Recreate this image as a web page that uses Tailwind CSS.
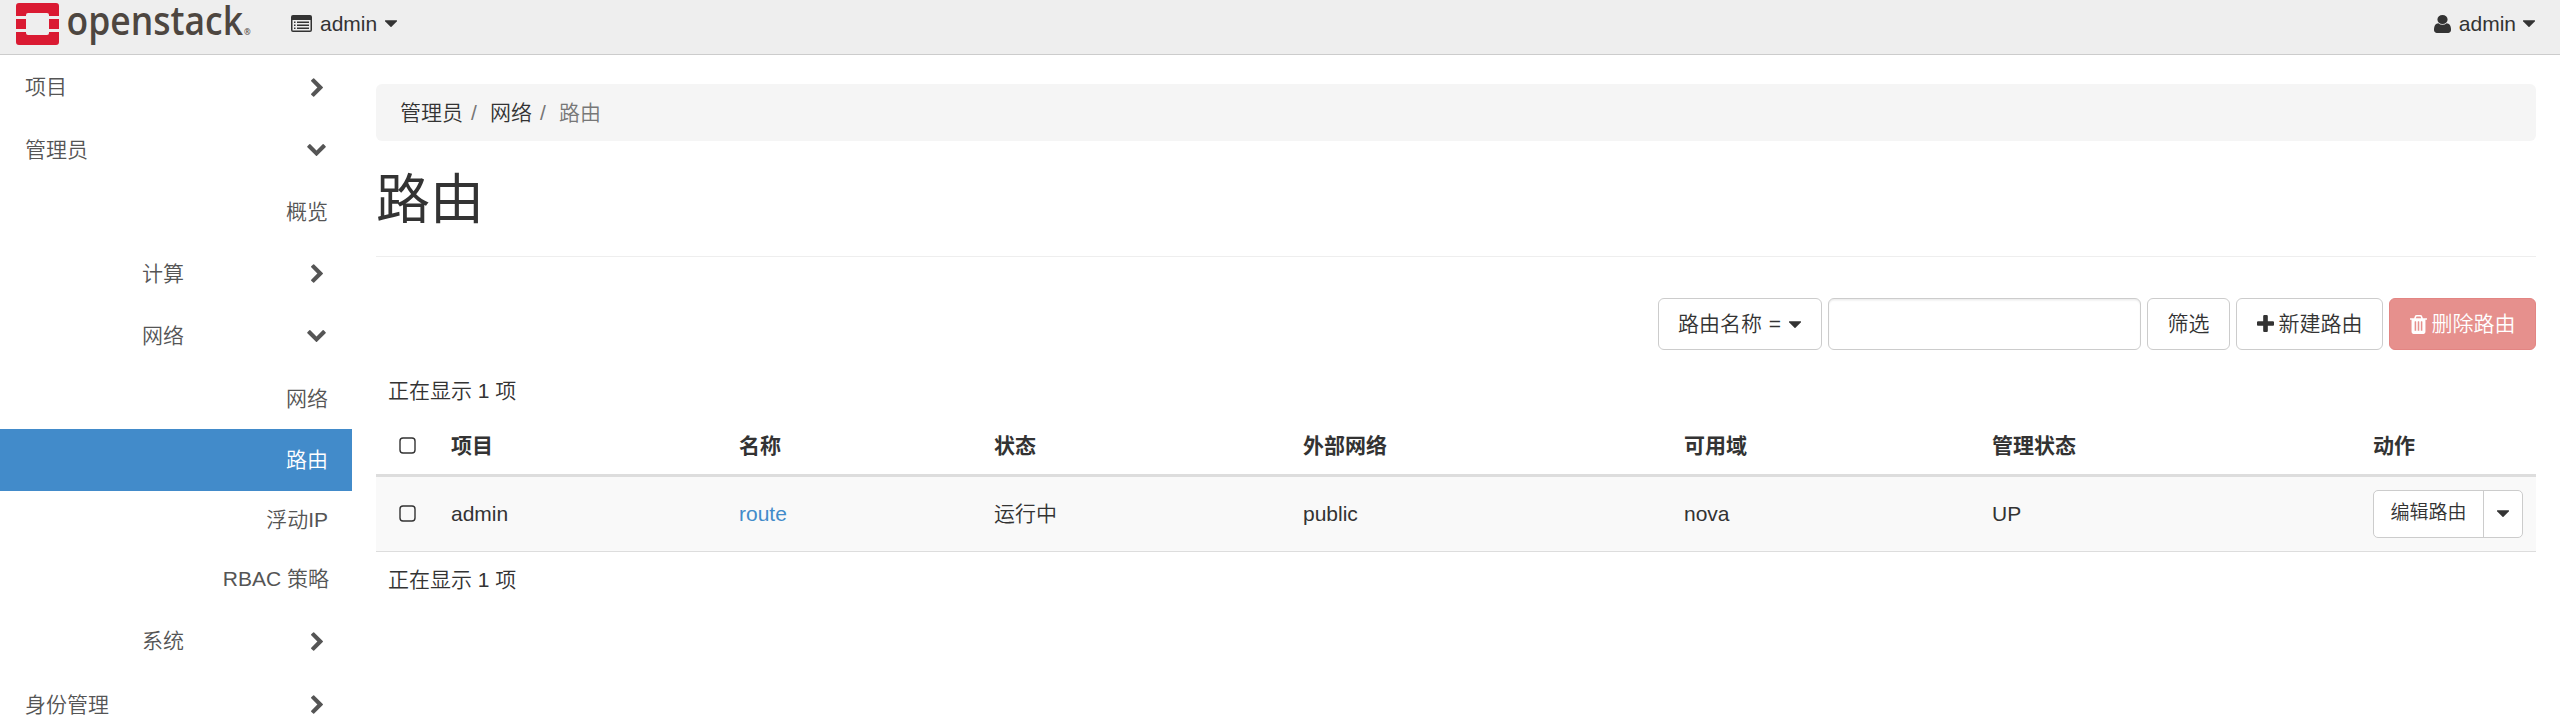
<!DOCTYPE html>
<html lang="zh-CN">
<head>
<meta charset="utf-8">
<title>路由 - OpenStack Dashboard</title>
<script src="https://cdn.jsdelivr.net/npm/@tailwindcss/browser@4"></script>
</head>
<body class="h-[727px] overflow-hidden bg-white font-['Liberation_Sans','Noto_Sans_CJK_SC',sans-serif] text-[21px] leading-[30px] font-[350] text-[#333]">
<svg class="hidden">
  <symbol id="right" viewBox="346 26 1036 1612"><path d="M1363 877l-742 742q-19 19-45 19t-45-19l-166-166q-19-19-19-45t19-45l531-531-531-531q-19-19-19-45t19-45l166-166q19-19 45-19t45 19l742 742q19 19 19 45t-19 45z"/></symbol>
  <symbol id="down" viewBox="90 532 1612 1036"><path d="M1683 808l-742 741q-19 19-45 19t-45-19l-742-741q-19-19-19-45.500t19-45.500l166-165q19-19 45-19t45 19l531 531 531-531q19-19 45-19t45 19l166 165q19 19 19 45.500t-19 45.500z"/></symbol>
  <symbol id="caret" viewBox="384 640 1024 576"><path d="M1408 704q0 26-19 45l-448 448q-19 19-45 19t-45-19l-448-448q-19-19-19-45t19-45 45-19h896q26 0 45 19t19 45z"/></symbol>
  <symbol id="box" viewBox="0 0 17 17"><rect x="1" y="1" width="15" height="15" rx="3" fill="none" stroke="#333" stroke-width="1.400"/></symbol>
</svg>

<header class="flex h-[55px] items-start justify-between border-b border-[#ccc] bg-[#eee]">
  <div class="flex">
    <svg class="ml-4 h-[54px] w-[240px]" viewBox="16 0 240 54">
      <path fill="#da1a32" d="M19 3h37q3 0 3 3v10H49v-1q0-2-2-2H28q-2 0-2 2v1H16V6q0-3 3-3zM16 19h10v10H16zM49 19h10v10H49zM16 32h10v1q0 2 2 2h19q2 0 2-2v-1h10v10q0 3-3 3H19q-3 0-3-3z"/>
      <text x="66.500" y="34.500" textLength="176.500" lengthAdjust="spacingAndGlyphs" font-family="Open Sans" font-weight="600" font-size="39" fill="#4d4640">openstack</text>
      <text x="244" y="34.500" font-family="Open Sans" font-weight="600" font-size="8" fill="#4d4640">®</text>
    </svg>
    <div class="ml-[35px] flex h-12 items-center">
      <svg class="-mt-0.5 h-[17px] w-[21px]" viewBox="0 0 21 17"><path fill="#333" fill-rule="evenodd" d="M2 0h17q2 0 2 2v13q0 2-2 2H2q-2 0-2-2V2q0-2 2-2zM1.500 5v10q0 .5.5.5h17q.5 0 .5-.5V5zM3 6.500h1.500V8H3zM6 6.500h12V8H6zM3 9.500h1.500V11H3zM6 9.500h12V11H6zM3 12.500h1.500V14H3zM6 12.500h12V14H6z"/></svg>
      <span class="ml-2">admin</span>
      <svg class="-mt-px ml-[8px] h-[7px] w-3 fill-[#333]"><use href="#caret"/></svg>
    </div>
  </div>
  <div class="mr-[25px] flex h-12 items-center">
    <svg class="-mt-px h-[18px] w-[17px] fill-[#333]" viewBox="256 128 1280 1536" preserveAspectRatio="none"><path d="M1536 1399q0 109-62.500 187t-150.500 78h-854q-88 0-150.500-78t-62.500-187q0-85 8.500-160.500t31.500-152 58.500-131 94-89 134.500-34.500q131 128 313 128t313-128q76 0 134.500 34.500t94 89 58.500 131 31.500 152 8.500 160.500zm-256-887q0 159-112.500 271.500t-271.500 112.500-271.500-112.500-112.500-271.500 112.500-271.500 271.500-112.500 271.500 112.500 112.500 271.500z"/></svg>
    <span class="ml-2">admin</span>
    <svg class="-mt-px ml-[7px] h-[7px] w-3 fill-[#333]"><use href="#caret"/></svg>
  </div>
</header>

<div class="flex">
  <nav class="flex h-[672px] w-[352px] shrink-0 flex-col overflow-hidden fill-[#555] pt-px text-[#555] *:shrink-0">
    <div class="flex h-[62px] items-center justify-between pr-[29px] pl-[25px]"><span>项目</span><svg class="h-[19px] w-3"><use href="#right"/></svg></div>
    <div class="flex h-[63px] items-center justify-between pr-[26px] pl-[25px]"><span>管理员</span><svg class="h-3 w-[19px]"><use href="#down"/></svg></div>
    <div class="flex h-[62px] items-center justify-end pr-6">概览</div>
    <div class="flex h-[61px] items-center justify-between pr-[29px] pl-[142px]"><span>计算</span><svg class="h-[19px] w-3"><use href="#right"/></svg></div>
    <div class="flex h-[63px] items-center justify-between pt-px pr-[26px] pl-[142px]"><span>网络</span><svg class="h-3 w-[19px]"><use href="#down"/></svg></div>
    <div class="flex h-[62px] items-center justify-end pt-0.5 pr-6">网络</div>
    <div class="flex h-[62px] items-center justify-end bg-[#428bca] pr-6 text-white">路由</div>
    <div class="flex h-[58px] items-center justify-end pr-6">浮动IP</div>
    <div class="flex h-[60px] items-center justify-end pr-[23px]">RBAC 策略</div>
    <div class="flex h-[63px] items-center justify-between pt-px pr-[29px] pl-[142px]"><span>系统</span><svg class="h-[19px] w-3"><use href="#right"/></svg></div>
    <div class="flex h-[63px] items-center justify-between pt-0.5 pr-[29px] pl-[25px]"><span>身份管理</span><svg class="h-[19px] w-3"><use href="#right"/></svg></div>
  </nav>

  <main class="ml-6 w-[2160px] pt-[29px]">
    <ol class="flex h-[57px] items-center rounded-md bg-[#f5f5f5] pl-6">
      <li>管理员</li><li class="w-[27px] pl-2 text-[#777]">/</li><li>网络</li><li class="w-[27px] pl-2 text-[#777]">/</li><li class="text-[#777]">路由</li>
    </ol>
    <div class="flex h-[116px] items-center border-b border-[#eee] pt-[3px]"><h1 class="text-[54px] leading-[60px] font-normal">路由</h1></div>

    <div class="mt-[41px] flex h-13 justify-end gap-1.5 *:flex *:items-center *:rounded-md *:border *:border-[#ccc]">
      <button class="w-[164px] pl-[19px]"><span>路由名称 <span class="ml-px">=</span></span><svg class="ml-[8px] h-[7px] w-3 fill-[#333]"><use href="#caret"/></svg></button>
      <input class="w-[313px] shadow-[inset_0_1.5px_1.5px_rgba(0,0,0,0.075)]" type="text">
      <button class="w-[83px] justify-center">筛选</button>
      <button class="w-[147px] justify-center gap-[5px]"><svg class="-mt-px h-[17px] w-[17px] fill-[#333]" viewBox="192 128 1408 1408"><path d="M1600 736v192q0 40-28 68t-68 28h-416v416q0 40-28 68t-68 28h-192q-40 0-68-28t-28-68v-416h-416q-40 0-68-28t-28-68v-192q0-40 28-68t68-28h416v-416q0-40 28-68t68-28h192q40 0 68 28t28 68v416h416q40 0 68 28t28 68z"/></svg><span>新建路由</span></button>
      <button class="w-[147px] justify-center gap-[5px] border-[#e38583]! bg-[#e6908d] text-white"><svg class="h-[19px] w-[17px] fill-white" viewBox="192 128 1408 1536" preserveAspectRatio="none"><path d="M704 1376v-704q0-14-9-23t-23-9h-64q-14 0-23 9t-9 23v704q0 14 9 23t23 9h64q14 0 23-9t9-23zm256 0v-704q0-14-9-23t-23-9h-64q-14 0-23 9t-9 23v704q0 14 9 23t23 9h64q14 0 23-9t9-23zm256 0v-704q0-14-9-23t-23-9h-64q-14 0-23 9t-9 23v704q0 14 9 23t23 9h64q14 0 23-9t9-23zm-544-992h448l-48-117q-7-9-17-11h-317q-10 2-17 11zm928 32v64q0 14-9 23t-23 9h-96v948q0 83-47 143.500t-113 60.500h-832q-66 0-113-58.500t-47-141.500v-952h-96q-14 0-23-9t-9-23v-64q0-14 9-23t23-9h309l70-167q15-37 54-63t79-26h320q40 0 79 26t54 63l70 167h309q14 0 23 9t9 23z"/></svg><span>删除路由</span></button>
    </div>

    <div class="mt-[26px] pl-3">正在显示 1 项</div>
    <div class="mt-[11px] grid h-[60px] grid-cols-[75px_288px_255px_309px_381px_308px_381px_163px] items-center border-b-3 border-[#ddd] font-bold">
      <div class="pl-[23px]"><svg class="h-[17px] w-[17px]"><use href="#box"/></svg></div>
      <div>项目</div><div>名称</div><div>状态</div><div>外部网络</div><div>可用域</div><div>管理状态</div><div>动作</div>
    </div>
    <div class="grid h-[75px] grid-cols-[75px_288px_255px_309px_381px_308px_381px_163px] items-center border-b border-[#ddd] bg-[#f9f9f9]">
      <div class="pb-px pl-[23px]"><svg class="h-[17px] w-[17px]"><use href="#box"/></svg></div>
      <div>admin</div><div class="text-[#428bca]">route</div><div>运行中</div><div>public</div><div>nova</div><div>UP</div>
      <div class="flex h-12 w-[150px] rounded-[5px] border border-[#ccc] bg-white text-[19px]">
        <div class="flex w-[109px] items-center justify-center pb-0.5">编辑路由</div>
        <div class="flex grow items-center justify-center border-l border-[#ccc]"><svg class="-mt-0.5 h-[7px] w-3 fill-[#333]"><use href="#caret"/></svg></div>
      </div>
    </div>
    <div class="mt-[13px] pl-3">正在显示 1 项</div>
  </main>
</div>
</body>
</html>
